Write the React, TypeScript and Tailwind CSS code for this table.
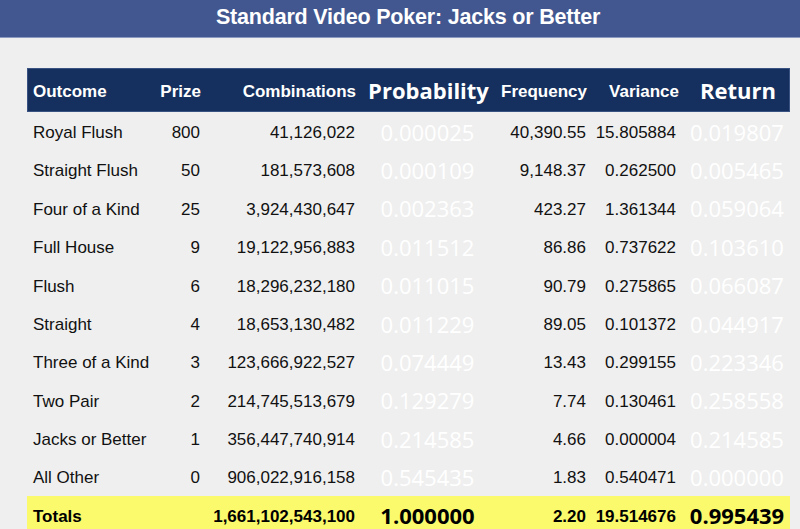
const rows = [
  ["Royal Flush", "800", "41,126,022", "0.000025", "40,390.55", "15.805884", "0.019807"],
  ["Straight Flush", "50", "181,573,608", "0.000109", "9,148.37", "0.262500", "0.005465"],
  ["Four of a Kind", "25", "3,924,430,647", "0.002363", "423.27", "1.361344", "0.059064"],
  ["Full House", "9", "19,122,956,883", "0.011512", "86.86", "0.737622", "0.103610"],
  ["Flush", "6", "18,296,232,180", "0.011015", "90.79", "0.275865", "0.066087"],
  ["Straight", "4", "18,653,130,482", "0.011229", "89.05", "0.101372", "0.044917"],
  ["Three of a Kind", "3", "123,666,922,527", "0.074449", "13.43", "0.299155", "0.223346"],
  ["Two Pair", "2", "214,745,513,679", "0.129279", "7.74", "0.130461", "0.258558"],
  ["Jacks or Better", "1", "356,447,740,914", "0.214585", "4.66", "0.000004", "0.214585"],
  ["All Other", "0", "906,022,916,158", "0.545435", "1.83", "0.540471", "0.000000"],
];

const sans = "font-['Liberation_Sans',Arial,sans-serif]";
const open = "font-['Open_Sans',sans-serif]";
const cols = "grid grid-cols-[113px_66px_155px_133px_98px_92px_106px]";

export default function App() {
  return (
    <div className={`w-[800px] h-[529px] overflow-hidden bg-[#efefef] ${sans}`}>
      {/* title bar */}
      <div className="h-[38px] bg-[#42578f] border-b border-[#8c9abf] flex items-center justify-center pl-[16px]">
        <h1 className="text-white font-bold text-[21.5px] tracking-[-0.2px] pb-[2px]">
          Standard Video Poker: Jacks or Better
        </h1>
      </div>

      <div className="ml-[27px] mt-[30px] w-[763px]">
        {/* header */}
        <div className={`${cols} h-[44px] items-center bg-[#15305e] border border-[#3a5281] text-white`}>
          <div className="pl-[5px] pt-[3px] font-bold text-[17px]">Outcome</div>
          <div className="pr-[6px] pt-[3px] text-right font-bold text-[17px]">Prize</div>
          <div className="pr-[6px] pt-[3px] text-right font-bold text-[17px]">Combinations</div>
          <div className={`text-center font-bold text-[22px] ${open}`}>Probability</div>
          <div className="pr-[6px] pt-[3px] text-right font-bold text-[17px]">Frequency</div>
          <div className="pr-[6px] pt-[3px] text-right font-bold text-[17px]">Variance</div>
          <div className={`text-center font-bold text-[22px] ${open}`}>Return</div>
        </div>

        {/* body */}
        {rows.map((r) => (
          <div key={r[0]} className={`${cols} h-[38.4px] items-center text-[17px] text-[#111]`}>
            <div className="pl-[6px] pt-[3px] whitespace-nowrap">{r[0]}</div>
            <div className="pr-[6px] pt-[3px] text-right">{r[1]}</div>
            <div className="pr-[6px] pt-[3px] text-right">{r[2]}</div>
            <div className={`pt-[2px] text-center text-[22px] text-white ${open}`}>{r[3]}</div>
            <div className="pr-[6px] pt-[3px] text-right">{r[4]}</div>
            <div className="pr-[8px] pt-[3px] text-right">{r[5]}</div>
            <div className={`pt-[2px] text-center text-[22px] text-white ${open}`}>{r[6]}</div>
          </div>
        ))}

        {/* totals */}
        <div className={`${cols} h-[38px] items-center bg-[#fafa6c] text-black font-bold text-[17px]`}>
          <div className="pl-[6px] pt-[3px]">Totals</div>
          <div></div>
          <div className="pr-[6px] pt-[3px] text-right">1,661,102,543,100</div>
          <div className={`pt-[2px] text-center text-[22px] ${open}`}>1.000000</div>
          <div className="pr-[6px] pt-[3px] text-right">2.20</div>
          <div className="pr-[8px] pt-[3px] text-right">19.514676</div>
          <div className={`pt-[2px] text-center text-[22px] ${open}`}>0.995439</div>
        </div>
      </div>
    </div>
  );
}
